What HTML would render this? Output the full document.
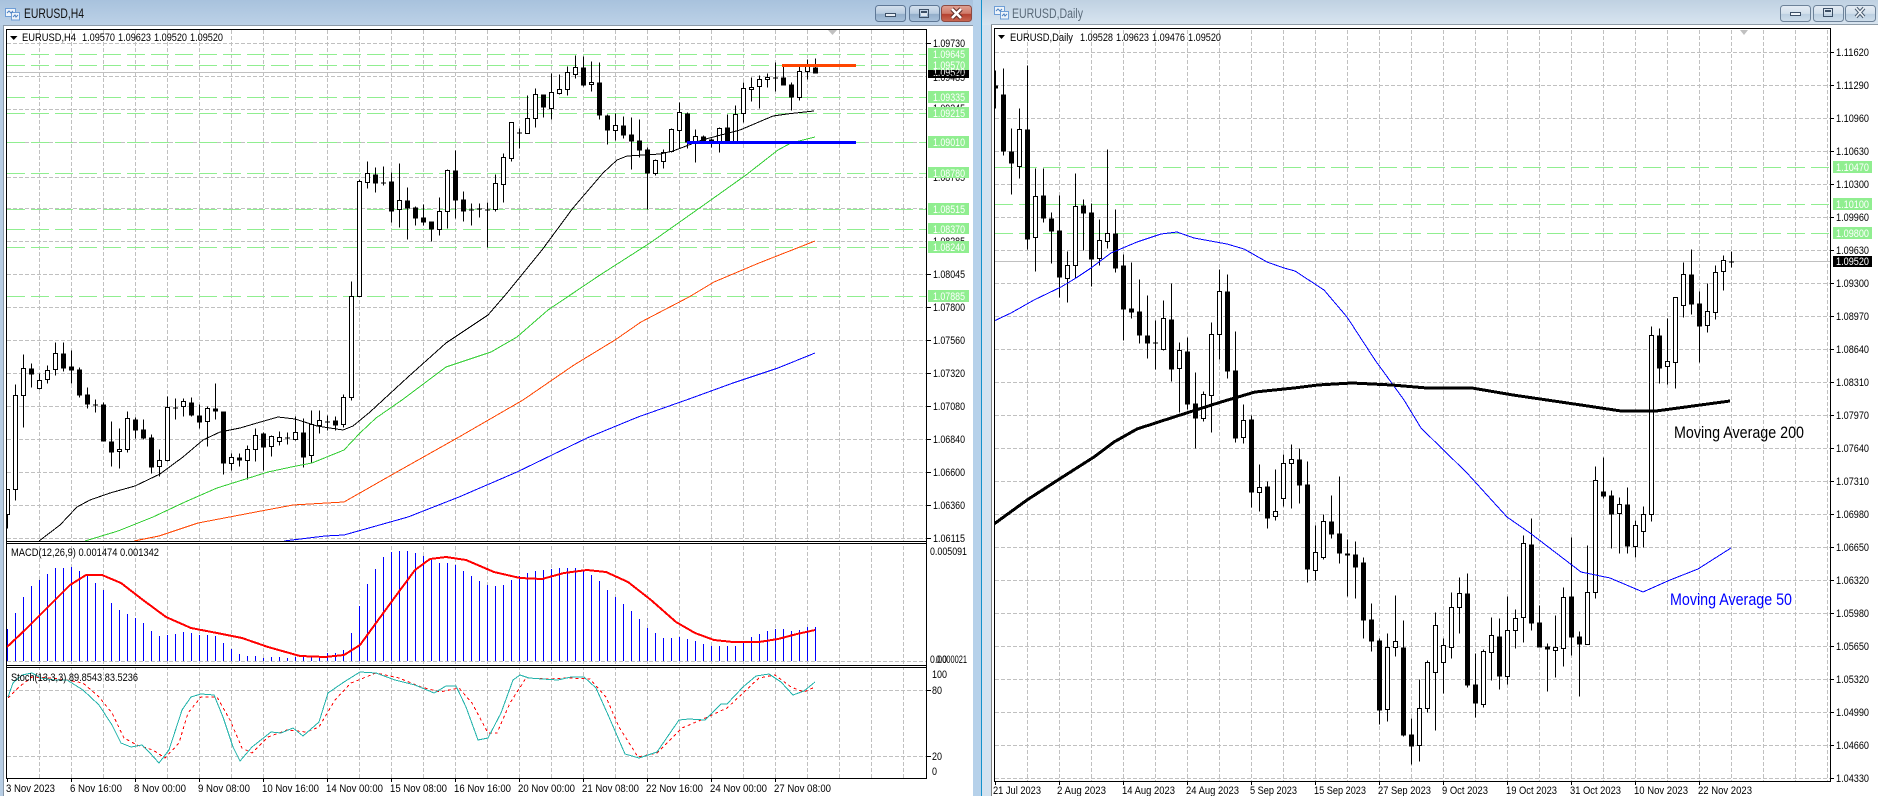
<!DOCTYPE html>
<html><head><meta charset="utf-8"><title>EURUSD</title>
<style>
html,body{margin:0;padding:0;background:#fff;width:1878px;height:796px;overflow:hidden}
svg{display:block}
text{font-family:"Liberation Sans",sans-serif;font-size:11px;fill:#000}
polyline{shape-rendering:crispEdges;stroke-linejoin:round}
.g{stroke:#c0c0c0;stroke-width:1;stroke-dasharray:4 2;fill:none}
.l{stroke:#90ee90;stroke-width:1;stroke-dasharray:18 6;fill:none}
.w{stroke:#000;stroke-width:1;fill:none}
.wb{stroke:#000;stroke-width:1;fill:#fff}
.bb{stroke:#000;stroke-width:5;fill:none}
.lb{fill:#90ee90}
.t{fill:#fff}
</style></head><body>
<svg width="1878" height="796" viewBox="0 0 1878 796" xmlns="http://www.w3.org/2000/svg">
<defs>
<linearGradient id="tl" x1="0" y1="0" x2="0" y2="1"><stop offset="0" stop-color="#a8c2dd"/><stop offset="1" stop-color="#bcd1e7"/></linearGradient>
<linearGradient id="tr" x1="0" y1="0" x2="0" y2="1"><stop offset="0" stop-color="#bfd1e2"/><stop offset="1" stop-color="#d9e5f0"/></linearGradient>
<linearGradient id="b1" x1="0" y1="0" x2="0" y2="1"><stop offset="0" stop-color="#d5e1ee"/><stop offset=".5" stop-color="#b9cce0"/><stop offset=".55" stop-color="#93aeca"/><stop offset="1" stop-color="#a9c2db"/></linearGradient>
<linearGradient id="b2" x1="0" y1="0" x2="0" y2="1"><stop offset="0" stop-color="#e0a396"/><stop offset=".5" stop-color="#cf7a69"/><stop offset=".55" stop-color="#b5402f"/><stop offset="1" stop-color="#c96a55"/></linearGradient>
<linearGradient id="b3" x1="0" y1="0" x2="0" y2="1"><stop offset="0" stop-color="#e4ecf4"/><stop offset=".5" stop-color="#d3e0ec"/><stop offset=".55" stop-color="#bccfe1"/><stop offset="1" stop-color="#cfdeeb"/></linearGradient>
<clipPath id="cl"><rect x="7" y="30" width="920" height="748"/></clipPath>
<clipPath id="cr"><rect x="995" y="30" width="835" height="751"/></clipPath>
</defs>

<!-- window chrome -->
<rect x="0" y="0" width="973" height="796" fill="#b7cde4"/>
<rect x="0" y="0" width="973" height="25" fill="url(#tl)"/>
<rect x="3" y="25" width="970" height="771" fill="#fff"/>
<rect x="3" y="25" width="970" height="1" fill="#8a99a8"/>
<rect x="3" y="25" width="1" height="771" fill="#8a99a8"/>
<rect x="973" y="0" width="8" height="796" fill="#b6d1ea"/>
<rect x="981" y="0" width="1" height="796" fill="#1392cc"/>
<rect x="982" y="0" width="896" height="25" fill="url(#tr)"/>
<rect x="982" y="25" width="9" height="771" fill="#d3e2f0"/>
<rect x="991" y="25" width="887" height="771" fill="#fff"/>
<rect x="991" y="24" width="887" height="1" fill="#8f9da9"/>
<rect x="991" y="25" width="1" height="771" fill="#808080"/>

<!-- title icons -->
<g fill="#eef4fa" stroke="#6f9ed6"><rect x="5.5" y="8.5" width="10" height="8"/><rect x="11.5" y="12.5" width="8" height="7.5"/></g>
<path d="M7 13l2-2 2 2 2-2M13 17l2-2 1 2 2-2" fill="none" stroke="#4a7fc0"/>
<g fill="#eef4fa" stroke="#6f9ed6"><rect x="994.5" y="6.5" width="10" height="8"/><rect x="1000.5" y="11.5" width="8" height="7.5"/></g>
<path d="M996 11l2-2 2 2 2-2M1002 16l2-2 1 2 2-2" fill="none" stroke="#4a7fc0"/>
<text x="24" y="18" style="font-size:13.5px;fill:#111" textLength="60" lengthAdjust="spacingAndGlyphs">EURUSD,H4</text>
<text x="1012" y="18" style="font-size:13.5px;fill:#5b6b7a" textLength="71" lengthAdjust="spacingAndGlyphs">EURUSD,Daily</text>

<!-- window buttons left -->
<rect x="875.5" y="5.5" width="30" height="16" rx="3" fill="url(#b1)" stroke="#5f7896"/>
<rect x="909.5" y="5.5" width="30" height="16" rx="3" fill="url(#b1)" stroke="#5f7896"/>
<rect x="941.5" y="5.5" width="30" height="16" rx="3" fill="url(#b2)" stroke="#8d4a42"/>
<rect x="885.5" y="13.5" width="10" height="3" fill="#e8eef5" stroke="#3c4f66"/>
<rect x="919.5" y="9.5" width="9" height="8" fill="none" stroke="#3c4f66"/><rect x="921" y="11" width="6" height="5" fill="#dfe8f1"/><rect x="921" y="11" width="6" height="2" fill="#3c4f66"/>
<path d="M952 9l9 9M961 9l-9 9" stroke="#5b2a25" stroke-width="4.5"/><path d="M952 9l9 9M961 9l-9 9" stroke="#fff" stroke-width="2.6"/>
<!-- window buttons right -->
<rect x="1780.5" y="5.5" width="30" height="16" rx="3" fill="url(#b3)" stroke="#6d8299"/>
<rect x="1813.5" y="5.5" width="30" height="16" rx="3" fill="url(#b3)" stroke="#6d8299"/>
<rect x="1845.5" y="5.5" width="30" height="16" rx="3" fill="url(#b3)" stroke="#6d8299"/>
<rect x="1790.5" y="12.5" width="10" height="3" fill="#f0f5fa" stroke="#3c4f66"/>
<rect x="1823.5" y="8.5" width="9" height="8" fill="none" stroke="#3c4f66"/><rect x="1825" y="10" width="6" height="2" fill="#3c4f66"/>
<path d="M1856 8l8 9M1864 8l-8 9" stroke="#4a5c70" stroke-width="3.6"/><path d="M1856 8l8 9M1864 8l-8 9" stroke="#eef3f8" stroke-width="1.6"/>

<!-- LEFT CHART -->
<g shape-rendering="crispEdges">
<path class="g" d="M39.5 30V778M71.5 30V778M103.5 30V778M135.5 30V778M167.5 30V778M199.5 30V778M231.5 30V778M263.5 30V778M295.5 30V778M327.5 30V778M359.5 30V778M391.5 30V778M423.5 30V778M455.5 30V778M487.5 30V778M519.5 30V778M551.5 30V778M583.5 30V778M615.5 30V778M647.5 30V778M679.5 30V778M711.5 30V778M743.5 30V778M775.5 30V778M807.5 30V778M839.5 30V778M871.5 30V778M903.5 30V778"/>
<path class="g" d="M7 43.5H927M7 76.5H927M7 109.5H927M7 142.5H927M7 177.5H927M7 208.5H927M7 241.5H927M7 274.5H927M7 307.5H927M7 340.5H927M7 373.5H927M7 406.5H927M7 439.5H927M7 472.5H927M7 505.5H927M7 538.5H927M7 661.5H927M7 690.5H927M7 756.5H927"/>
<path class="l" d="M7 54.5H927M7 65.5H927M7 97.5H927M7 113.5H927M7 142.5H927M7 173.5H927M7 209.5H927M7 229.5H927M7 247.5H927M7 296.5H927"/>
<path d="M7 72.5H927" stroke="#c0c0c0" fill="none"/>
</g>
<g clip-path="url(#cl)">
<g shape-rendering="crispEdges" transform="translate(.5 .5)">
<path class="w" d="M7 489V528M15 384V500M23 354V427M31 363V387M39 373V389M47 365V383M55 342V375M63 342V371M71 350V383M79 367V397M87 387V408M95 399V412M103 402V441M111 421V466M119 428V468M127 411V452M135 417V438M143 419V439M151 434V473M159 449V476M167 396V461M175 398V419M183 398V416M191 397V416M199 404V428M207 406V446M215 383V419M223 411V474M231 453V470M239 453V466M247 445V479M255 428V461M263 432V470M271 435V456M279 431V445M287 432V444M295 416V440M303 418V467M311 410V463M319 410V433M327 415V430M335 416V430M343 394V427M351 281V400M359 179V296M367 161V188M375 167V192M383 166V185M391 172V222M399 163V227M407 187V239M415 206V225M423 204V225M431 221V241M439 197V235M447 169V228M455 150V218M463 191V221M471 203V225M479 203V217M487 202V247M495 174V211M503 153V202M511 122V161M519 128V148M527 95V133M535 88V127M543 94V117M551 73V119M559 74V94M567 66V95M575 55V78M583 56V86M591 61V91M599 62V119M607 114V144M615 113V140M623 116V138M631 117V169M639 119V157M647 147V209M655 159V175M663 149V168M671 128V152M679 102V148M687 112V148M695 129V162M703 135V142M711 138V147M719 127V152M727 114V142M735 105V141M743 82V122M751 77V101M759 75V108M767 73V87M775 62V91M783 65V85M791 82V110M799 66V100M807 59V79M815 58V73"/>
<path class="wb" d="M5 489h4V514h-4zM13 395h4V489h-4zM21 368h4V395h-4zM37 380h4V388h-4zM45 370h4V379h-4zM53 353h4V369h-4zM117 449h4V451h-4zM125 418h4V449h-4zM157 460h4V466h-4zM165 407h4V460h-4zM181 401h4V406h-4zM205 408h4V421h-4zM229 457h4V463h-4zM245 449h4V460h-4zM253 435h4V449h-4zM269 436h4V446h-4zM277 437h4V441h-4zM293 432h4V439h-4zM309 424h4V455h-4zM317 420h4V425h-4zM341 397h4V424h-4zM349 296h4V397h-4zM357 181h4V296h-4zM365 173h4V182h-4zM397 200h4V209h-4zM437 211h4V229h-4zM445 170h4V211h-4zM493 183h4V209h-4zM501 157h4V184h-4zM509 122h4V158h-4zM525 118h4V133h-4zM533 94h4V118h-4zM549 92h4V108h-4zM557 89h4V93h-4zM565 72h4V89h-4zM573 67h4V74h-4zM589 82h4V84h-4zM613 125h4V130h-4zM653 160h4V173h-4zM661 152h4V161h-4zM669 129h4V151h-4zM677 112h4V130h-4zM693 136h4V142h-4zM717 128h4V142h-4zM733 114h4V141h-4zM741 88h4V113h-4zM749 87h4V89h-4zM757 79h4V86h-4zM765 77h4V79h-4zM797 71h4V97h-4zM805 66h4V71h-4z"/>
<path class="bb" d="M31 368V374M63 353V368M71 366V370M79 369V395M87 394V404M95 404V405M103 404V441M111 441V452M135 419V430M143 429V438M151 437V467M175 407V408M191 402V415M199 415V422M215 408V411M223 411V463M239 457V460M263 433V447M287 437V438M303 432V457M327 421V422M335 420V425M375 174V183M383 182V183M391 181V211M407 200V208M415 207V218M423 217V222M431 221V229M455 170V200M463 199V211M471 209V210M479 208V209M487 209V210M519 132V133M543 94V107M583 67V85M599 82V115M607 115V130M623 125V135M631 134V141M639 140V150M647 149V173M687 113V142M703 136V142M711 139V141M727 127V142M775 77V78M783 77V85M791 84V97M815 67V73"/>
</g>
<polyline fill="none" stroke="#000" points="39,541 60,525 77,507 90,500 110,493 135,486 160,474 183,457 203,440 220,432 240,428 257,423 278,417 295,419 317,426 343,430 353,426 370,412 383,400 408,377 446,343 488,315 507,293 542,250 573,208 603,173 617,160 627,156 660,154 673,151 702,140 740,130 773,116 787,114 814,111"/>
<polyline fill="none" stroke="#32cd32" points="85,541 118,531 153,517 185,502 217,488 268,472 296,466 312,463 344,450 360,433 376,418 402,400 446,367 491,352 517,337 548,310 600,275 650,243 701,207 746,175 778,150 791,143 815,137"/>
<polyline fill="none" stroke="#ff4500" points="134,541 159,536 198,523 261,511 293,505 344,502 395,473 459,437 523,400 574,365 615,340 641,322 689,297 714,282 759,263 815,241"/>
<polyline fill="none" stroke="#0000ff" points="284,541 325,536 344,535 408,517 459,497 517,472 587,438 638,417 689,399 733,383 778,368 815,353"/>
<path d="M687 142.5H856" stroke="#0000ff" stroke-width="3"/>
<path d="M782 65.5H856" stroke="#ff4500" stroke-width="3"/>
<!-- MACD -->
<path stroke="#0000ff" fill="none" shape-rendering="crispEdges" d="M7.5 661V629M15.5 661V613M23.5 661V597M31.5 661V586M39.5 661V580M47.5 661V574M55.5 661V568M63.5 661V568M71.5 661V567M79.5 661V571M87.5 661V575M95.5 661V583M103.5 661V590M111.5 661V603M119.5 661V610M127.5 661V614M135.5 661V618M143.5 661V623M151.5 661V631M159.5 661V636M167.5 661V635M175.5 661V634M183.5 661V632M191.5 661V633M199.5 661V635M207.5 661V635M215.5 661V636M223.5 661V643M231.5 661V649M239.5 661V654M247.5 661V656M255.5 661V656M263.5 661V658M271.5 661V657M279.5 661V657M287.5 661V658M295.5 661V657M303.5 661V657M311.5 661V656M319.5 661V656M327.5 661V653M335.5 661V653M343.5 661V650M351.5 661V633M359.5 661V606M367.5 661V584M375.5 661V569M383.5 661V557M391.5 661V552M399.5 661V551M407.5 661V551M415.5 661V553M423.5 661V556M431.5 661V560M439.5 661V563M447.5 661V563M455.5 661V565M463.5 661V571M471.5 661V576M479.5 661V581M487.5 661V585M495.5 661V586M503.5 661V585M511.5 661V580M519.5 661V576M527.5 661V573M535.5 661V571M543.5 661V570M551.5 661V569M559.5 661V568M567.5 661V568M575.5 661V568M583.5 661V570M591.5 661V575M599.5 661V581M607.5 661V590M615.5 661V597M623.5 661V604M631.5 661V611M639.5 661V619M647.5 661V628M655.5 661V633M663.5 661V638M671.5 661V638M679.5 661V637M687.5 661V639M695.5 661V641M703.5 661V644M711.5 661V646M719.5 661V646M727.5 661V646M735.5 661V646M743.5 661V642M751.5 661V637M759.5 661V634M767.5 661V631M775.5 661V629M783.5 661V629M791.5 661V631M799.5 661V630M807.5 661V627M815.5 661V627"/>
<polyline fill="none" stroke="#ff0000" stroke-width="2" points="7,647 25,630 48,607 70,585 86,575 102,575 121,583 143,600 166,617 191,628 217,633 242,638 268,647 300,656 325,657 344,655 360,645 376,623 395,597 415,570 430,559 446,557 466,560 494,572 520,578 542,579 564,573 587,570 606,572 628,582 651,600 676,622 695,633 714,640 733,642 759,642 778,639 797,634 815,630"/>
<!-- Stoch -->
<polyline fill="none" stroke="#ff0000" stroke-dasharray="3 3" points="8,698 19,687 32,677 51,678 67,680 83,683 99,697 112,713 124,738 137,745 153,750 165,758 179,743 188,713 201,697 217,697 230,720 242,748 252,753 268,737 287,730 306,732 319,727 335,700 351,683 376,673 399,678 421,687 440,692 459,688 472,703 488,733 497,733 510,703 526,678 549,679 568,678 590,679 606,697 619,727 638,757 657,753 682,728 701,720 727,708 743,693 759,678 775,675 791,687 804,692 815,687"/>
<polyline fill="none" stroke="#20b2aa" points="8,697 13,683 22,675 32,673 41,678 54,680 67,680 83,690 99,705 112,725 121,743 131,747 142,745 150,753 159,763 169,750 182,710 191,697 201,694 214,695 223,717 233,747 240,761 252,747 271,732 281,733 293,728 303,736 319,722 328,693 344,682 360,672 376,673 395,680 415,685 434,693 446,686 456,686 466,707 478,740 488,738 501,713 513,680 520,675 529,678 542,679 558,680 571,677 584,677 596,688 609,717 625,754 639,758 657,752 679,720 689,719 705,720 721,704 727,704 743,687 756,676 769,674 781,682 793,695 804,691 815,682"/>
</g>
<polygon points="828,30 837,30 832.5,35" fill="#c0c0c0"/>
<!-- left frames -->
<g shape-rendering="crispEdges">
<rect x="7" y="542" width="920" height="2" fill="#fff"/><rect x="7" y="666" width="920" height="1" fill="#fff"/>
<path fill="none" stroke="#000" d="M6.5 778.5V29.5H926.5V778.5ZM6.5 541.5H927M6.5 543.5H927M6.5 665.5H927M6.5 667.5H927M927 43.5h4M927 274.5h4M927 307.5h4M927 340.5h4M927 373.5h4M927 406.5h4M927 439.5h4M927 472.5h4M927 505.5h4M927 538.5h4M927 690.5h4M927 756.5h4M135.5 778v4M263.5 778v4M391.5 778v4M519.5 778v4M647.5 778v4M775.5 778v4M7.5 778v4M71.5 778v4M199.5 778v4M327.5 778v4M455.5 778v4M583.5 778v4M711.5 778v4"/>
</g>
<polygon points="10,36 17.5,36 13.75,40" fill="#000"/>
<text x="22" y="41" textLength="54" lengthAdjust="spacingAndGlyphs">EURUSD,H4</text>
<text x="82" y="41" textLength="33" lengthAdjust="spacingAndGlyphs">1.09570</text>
<text x="118" y="41" textLength="33" lengthAdjust="spacingAndGlyphs">1.09623</text>
<text x="154" y="41" textLength="33" lengthAdjust="spacingAndGlyphs">1.09520</text>
<text x="190" y="41" textLength="33" lengthAdjust="spacingAndGlyphs">1.09520</text>
<text x="11" y="556" textLength="148" lengthAdjust="spacingAndGlyphs">MACD(12,26,9) 0.001474 0.001342</text>
<text x="11" y="681" textLength="127" lengthAdjust="spacingAndGlyphs">Stoch(13,3,3) 89.8543 83.5236</text>

<!-- left axis labels -->
<g>
<text x="933" y="47" textLength="32" lengthAdjust="spacingAndGlyphs">1.09730</text>
<text x="933" y="112" textLength="32" lengthAdjust="spacingAndGlyphs">1.09245</text>
<text x="933" y="181" textLength="32" lengthAdjust="spacingAndGlyphs">1.08765</text>
<text x="933" y="245" textLength="32" lengthAdjust="spacingAndGlyphs">1.08285</text>
<text x="933" y="278" textLength="32" lengthAdjust="spacingAndGlyphs">1.08045</text>
<text x="933" y="311" textLength="32" lengthAdjust="spacingAndGlyphs">1.07800</text>
<text x="933" y="344" textLength="32" lengthAdjust="spacingAndGlyphs">1.07560</text>
<text x="933" y="377" textLength="32" lengthAdjust="spacingAndGlyphs">1.07320</text>
<text x="933" y="410" textLength="32" lengthAdjust="spacingAndGlyphs">1.07080</text>
<text x="933" y="443" textLength="32" lengthAdjust="spacingAndGlyphs">1.06840</text>
<text x="933" y="476" textLength="32" lengthAdjust="spacingAndGlyphs">1.06600</text>
<text x="933" y="509" textLength="32" lengthAdjust="spacingAndGlyphs">1.06360</text>
<text x="933" y="542" textLength="32" lengthAdjust="spacingAndGlyphs">1.06115</text>
<text x="930" y="555" textLength="37" lengthAdjust="spacingAndGlyphs">0.005091</text>
<text x="930" y="663" textLength="17" lengthAdjust="spacingAndGlyphs">0.00</text>
<text x="936" y="663" textLength="31" lengthAdjust="spacingAndGlyphs">0.000021</text>
<text x="932" y="678" textLength="15" lengthAdjust="spacingAndGlyphs">100</text>
<text x="932" y="694" textLength="10" lengthAdjust="spacingAndGlyphs">80</text>
<text x="932" y="760" textLength="10" lengthAdjust="spacingAndGlyphs">20</text>
<text x="932" y="775" textLength="5" lengthAdjust="spacingAndGlyphs">0</text>
</g>
<g>
<rect class="lb" x="928" y="48" width="41" height="23"/>
<rect class="lb" x="928" y="91" width="41" height="12"/>
<rect class="lb" x="928" y="107" width="41" height="11"/>
<rect class="lb" x="928" y="136" width="41" height="12"/>
<rect class="lb" x="928" y="167" width="41" height="11"/>
<rect class="lb" x="928" y="203" width="41" height="12"/>
<rect class="lb" x="928" y="223" width="41" height="11"/>
<rect class="lb" x="928" y="241" width="41" height="12"/>
<rect class="lb" x="928" y="290" width="41" height="12"/>
<text class="t" x="933" y="58" textLength="32" lengthAdjust="spacingAndGlyphs">1.09645</text>
<text class="t" x="933" y="69" textLength="32" lengthAdjust="spacingAndGlyphs">1.09570</text>
<text class="t" x="933" y="101" textLength="32" lengthAdjust="spacingAndGlyphs">1.09335</text>
<text class="t" x="933" y="117" textLength="32" lengthAdjust="spacingAndGlyphs">1.09215</text>
<text class="t" x="933" y="146" textLength="32" lengthAdjust="spacingAndGlyphs">1.09010</text>
<text class="t" x="933" y="177" textLength="32" lengthAdjust="spacingAndGlyphs">1.08780</text>
<text class="t" x="933" y="213" textLength="32" lengthAdjust="spacingAndGlyphs">1.08515</text>
<text class="t" x="933" y="233" textLength="32" lengthAdjust="spacingAndGlyphs">1.08370</text>
<text class="t" x="933" y="251" textLength="32" lengthAdjust="spacingAndGlyphs">1.08240</text>
<text class="t" x="933" y="300" textLength="32" lengthAdjust="spacingAndGlyphs">1.07885</text>
<rect x="928" y="70" width="41" height="8" fill="#000"/>
<text class="t" x="933" y="76" textLength="32" lengthAdjust="spacingAndGlyphs">1.09520</text>
<text x="933" y="81" textLength="32" lengthAdjust="spacingAndGlyphs">1.09485</text>
</g>
<g>
<text x="6" y="792" textLength="49" lengthAdjust="spacingAndGlyphs">3 Nov 2023</text>
<text x="70" y="792" textLength="52" lengthAdjust="spacingAndGlyphs">6 Nov 16:00</text>
<text x="134" y="792" textLength="52" lengthAdjust="spacingAndGlyphs">8 Nov 00:00</text>
<text x="198" y="792" textLength="52" lengthAdjust="spacingAndGlyphs">9 Nov 08:00</text>
<text x="262" y="792" textLength="57" lengthAdjust="spacingAndGlyphs">10 Nov 16:00</text>
<text x="326" y="792" textLength="57" lengthAdjust="spacingAndGlyphs">14 Nov 00:00</text>
<text x="390" y="792" textLength="57" lengthAdjust="spacingAndGlyphs">15 Nov 08:00</text>
<text x="454" y="792" textLength="57" lengthAdjust="spacingAndGlyphs">16 Nov 16:00</text>
<text x="518" y="792" textLength="57" lengthAdjust="spacingAndGlyphs">20 Nov 00:00</text>
<text x="582" y="792" textLength="57" lengthAdjust="spacingAndGlyphs">21 Nov 08:00</text>
<text x="646" y="792" textLength="57" lengthAdjust="spacingAndGlyphs">22 Nov 16:00</text>
<text x="710" y="792" textLength="57" lengthAdjust="spacingAndGlyphs">24 Nov 00:00</text>
<text x="774" y="792" textLength="57" lengthAdjust="spacingAndGlyphs">27 Nov 08:00</text>
</g>

<!-- RIGHT CHART -->
<g shape-rendering="crispEdges">
<path class="g" d="M1027.5 30V781M1059.5 30V781M1091.5 30V781M1123.5 30V781M1155.5 30V781M1187.5 30V781M1219.5 30V781M1251.5 30V781M1283.5 30V781M1315.5 30V781M1347.5 30V781M1379.5 30V781M1411.5 30V781M1443.5 30V781M1475.5 30V781M1507.5 30V781M1539.5 30V781M1571.5 30V781M1603.5 30V781M1635.5 30V781M1667.5 30V781M1699.5 30V781M1731.5 30V781M1763.5 30V781M1795.5 30V781M1827.5 30V781"/>
<path class="g" d="M995 52.5H1830M995 85.5H1830M995 118.5H1830M995 151.5H1830M995 184.5H1830M995 217.5H1830M995 250.5H1830M995 283.5H1830M995 316.5H1830M995 349.5H1830M995 382.5H1830M995 415.5H1830M995 448.5H1830M995 481.5H1830M995 514.5H1830M995 547.5H1830M995 580.5H1830M995 613.5H1830M995 646.5H1830M995 679.5H1830M995 712.5H1830M995 745.5H1830M995 778.5H1830"/>
<path class="l" d="M995 167.5H1830M995 204.5H1830M995 233.5H1830"/>
<path d="M995 261.5H1830" stroke="#c0c0c0" fill="none"/>
</g>
<g clip-path="url(#cr)">
<g shape-rendering="crispEdges" transform="translate(.5 .5)">
<path class="w" d="M995 70V108M1003 68V155M1011 128V194M1019 108V178M1027 65V249M1035 168V271M1043 168V222M1051 212V263M1059 195V297M1067 251V302M1075 173V278M1083 199V250M1091 203V286M1099 219V265M1107 149V248M1115 209V272M1123 254V340M1131 262V318M1139 279V343M1147 295V358M1155 320V369M1163 300V350M1171 283V381M1179 342V412M1187 337V409M1195 372V448M1203 391V421M1211 322V432M1219 269V359M1227 274V378M1235 331V442M1243 404V443M1251 415V507M1259 464V511M1267 481V528M1275 469V520M1283 454V506M1291 444V508M1299 448V503M1307 461V582M1315 525V580M1323 514V559M1331 495V538M1339 476V563M1347 539V596M1355 541V598M1363 557V638M1371 603V651M1379 638V724M1387 633V721M1395 595V656M1403 620V736M1411 718V764M1419 679V761M1427 660V712M1435 612V730M1443 638V693M1451 592V658M1459 577V633M1467 573V687M1475 653V717M1483 649V707M1491 617V680M1499 618V689M1507 596V684M1515 609V648M1523 535V642M1531 518V630M1539 605V647M1547 643V691M1555 615V677M1563 587V666M1571 537V655M1579 631V696M1587 545V644M1595 466V598M1603 457V498M1611 490V548M1619 497V553M1627 487V553M1635 520V557M1643 506V547M1651 326V521M1659 328V383M1667 318V384M1675 297V388M1683 262V317M1691 249V314M1699 291V362M1707 283V332M1715 265V319M1723 255V290M1731 251V267"/>
<path class="wb" d="M1017 129h4V166h-4zM1033 196h4V237h-4zM1065 265h4V278h-4zM1073 206h4V265h-4zM1097 240h4V258h-4zM1105 233h4V241h-4zM1161 318h4V349h-4zM1177 350h4V368h-4zM1201 394h4V418h-4zM1209 334h4V395h-4zM1217 291h4V334h-4zM1241 420h4V437h-4zM1257 487h4V492h-4zM1273 511h4V516h-4zM1281 463h4V498h-4zM1289 459h4V463h-4zM1313 552h4V570h-4zM1321 521h4V557h-4zM1393 641h4V647h-4zM1385 647h4V709h-4zM1417 708h4V745h-4zM1425 662h4V708h-4zM1433 625h4V672h-4zM1441 645h4V662h-4zM1449 607h4V647h-4zM1457 593h4V607h-4zM1481 651h4V704h-4zM1489 635h4V652h-4zM1505 630h4V676h-4zM1513 618h4V630h-4zM1521 543h4V617h-4zM1553 647h4V650h-4zM1561 597h4V648h-4zM1585 592h4V644h-4zM1593 480h4V592h-4zM1617 504h4V513h-4zM1633 525h4V546h-4zM1641 514h4V531h-4zM1649 335h4V514h-4zM1665 361h4V366h-4zM1673 297h4V362h-4zM1681 274h4V305h-4zM1705 311h4V325h-4zM1713 272h4V312h-4zM1721 260h4V271h-4z"/>
<path class="bb" d="M995 85V88M1003 94V151M1011 151V163M1027 129V239M1043 195V218M1051 218V231M1059 230V277M1083 205V213M1091 212V259M1115 233V268M1123 265V309M1131 308V312M1139 311V335M1147 335V343M1155 342V343M1171 319V369M1187 351V404M1195 403V418M1227 291V371M1235 370V438M1251 419V492M1267 486V518M1299 459V485M1307 484V569M1331 521V534M1339 533V553M1347 553V555M1355 554V567M1363 562V620M1371 619V641M1379 640V710M1403 647V735M1411 734V746M1467 593V685M1475 684V703M1499 636V676M1531 544V623M1539 622V647M1547 646V649M1571 596V637M1579 636V644M1603 491V496M1611 495V514M1627 504V546M1659 335V368M1691 274V304M1699 303V326M1731 261V262"/>
</g>
<polyline fill="none" stroke="#0000ff" points="994,321 1011,313 1034,300 1061,287 1076,278 1091,268 1111,253 1137,242 1161,234 1177,232 1194,238 1227,244 1244,249 1267,262 1284,268 1295,271 1324,290 1347,317 1375,360 1404,400 1421,428 1467,473 1507,517 1530,533 1581,572 1610,578 1643,592 1670,580 1698,569 1731,548"/>
<polyline fill="none" stroke="#000" stroke-width="3" points="994,524 1027,500 1061,478 1094,457 1114,442 1137,429 1174,417 1221,402 1255,392 1294,388 1318,385 1352,383 1392,385 1427,388 1472,388 1513,395 1547,400 1581,405 1621,411 1656,411 1730,401"/>
</g>
<polygon points="1740,30 1748,30 1744,35" fill="#c0c0c0"/>
<g shape-rendering="crispEdges">
<path fill="none" stroke="#000" d="M994.5 781.5V28.5H1830.5V781.5ZM1830 52.5h4M1830 85.5h4M1830 118.5h4M1830 151.5h4M1830 184.5h4M1830 217.5h4M1830 250.5h4M1830 283.5h4M1830 316.5h4M1830 349.5h4M1830 382.5h4M1830 415.5h4M1830 448.5h4M1830 481.5h4M1830 514.5h4M1830 547.5h4M1830 580.5h4M1830 613.5h4M1830 646.5h4M1830 679.5h4M1830 712.5h4M1830 745.5h4M1830 778.5h4M995.5 781v4M1059.5 781v4M1123.5 781v4M1187.5 781v4M1251.5 781v4M1315.5 781v4M1379.5 781v4M1443.5 781v4M1507.5 781v4M1571.5 781v4M1635.5 781v4M1699.5 781v4"/>
</g>
<polygon points="998,35 1005,35 1001.5,39" fill="#000"/>
<text x="1010" y="41" textLength="63" lengthAdjust="spacingAndGlyphs">EURUSD,Daily</text>
<text x="1080" y="41" textLength="33" lengthAdjust="spacingAndGlyphs">1.09528</text>
<text x="1116" y="41" textLength="33" lengthAdjust="spacingAndGlyphs">1.09623</text>
<text x="1152" y="41" textLength="33" lengthAdjust="spacingAndGlyphs">1.09476</text>
<text x="1188" y="41" textLength="33" lengthAdjust="spacingAndGlyphs">1.09520</text>
<text x="1674" y="438" style="font-size:16.5px" textLength="130" lengthAdjust="spacingAndGlyphs">Moving Average 200</text>
<text x="1670" y="605" style="font-size:16.5px;fill:#0000ff" textLength="122" lengthAdjust="spacingAndGlyphs">Moving Average 50</text>

<g>
<text x="1836" y="56" textLength="33" lengthAdjust="spacingAndGlyphs">1.11620</text>
<text x="1836" y="89" textLength="33" lengthAdjust="spacingAndGlyphs">1.11290</text>
<text x="1836" y="122" textLength="33" lengthAdjust="spacingAndGlyphs">1.10960</text>
<text x="1836" y="155" textLength="33" lengthAdjust="spacingAndGlyphs">1.10630</text>
<text x="1836" y="188" textLength="33" lengthAdjust="spacingAndGlyphs">1.10300</text>
<text x="1836" y="221" textLength="33" lengthAdjust="spacingAndGlyphs">1.09960</text>
<text x="1836" y="254" textLength="33" lengthAdjust="spacingAndGlyphs">1.09630</text>
<text x="1836" y="287" textLength="33" lengthAdjust="spacingAndGlyphs">1.09300</text>
<text x="1836" y="320" textLength="33" lengthAdjust="spacingAndGlyphs">1.08970</text>
<text x="1836" y="353" textLength="33" lengthAdjust="spacingAndGlyphs">1.08640</text>
<text x="1836" y="386" textLength="33" lengthAdjust="spacingAndGlyphs">1.08310</text>
<text x="1836" y="419" textLength="33" lengthAdjust="spacingAndGlyphs">1.07970</text>
<text x="1836" y="452" textLength="33" lengthAdjust="spacingAndGlyphs">1.07640</text>
<text x="1836" y="485" textLength="33" lengthAdjust="spacingAndGlyphs">1.07310</text>
<text x="1836" y="518" textLength="33" lengthAdjust="spacingAndGlyphs">1.06980</text>
<text x="1836" y="551" textLength="33" lengthAdjust="spacingAndGlyphs">1.06650</text>
<text x="1836" y="584" textLength="33" lengthAdjust="spacingAndGlyphs">1.06320</text>
<text x="1836" y="617" textLength="33" lengthAdjust="spacingAndGlyphs">1.05980</text>
<text x="1836" y="650" textLength="33" lengthAdjust="spacingAndGlyphs">1.05650</text>
<text x="1836" y="683" textLength="33" lengthAdjust="spacingAndGlyphs">1.05320</text>
<text x="1836" y="716" textLength="33" lengthAdjust="spacingAndGlyphs">1.04990</text>
<text x="1836" y="749" textLength="33" lengthAdjust="spacingAndGlyphs">1.04660</text>
<text x="1836" y="782" textLength="33" lengthAdjust="spacingAndGlyphs">1.04330</text>
<rect class="lb" x="1833" y="161" width="39" height="12"/>
<rect class="lb" x="1833" y="198" width="39" height="12"/>
<rect class="lb" x="1833" y="227" width="39" height="12"/>
<text class="t" x="1836" y="171" textLength="33" lengthAdjust="spacingAndGlyphs">1.10470</text>
<text class="t" x="1836" y="208" textLength="33" lengthAdjust="spacingAndGlyphs">1.10100</text>
<text class="t" x="1836" y="237" textLength="33" lengthAdjust="spacingAndGlyphs">1.09800</text>
<rect x="1833" y="256" width="39" height="11" fill="#000"/>
<text class="t" x="1836" y="265" textLength="33" lengthAdjust="spacingAndGlyphs">1.09520</text>
</g>
<g>
<text x="993" y="794" textLength="48" lengthAdjust="spacingAndGlyphs">21 Jul 2023</text>
<text x="1057" y="794" textLength="49" lengthAdjust="spacingAndGlyphs">2 Aug 2023</text>
<text x="1122" y="794" textLength="53" lengthAdjust="spacingAndGlyphs">14 Aug 2023</text>
<text x="1186" y="794" textLength="53" lengthAdjust="spacingAndGlyphs">24 Aug 2023</text>
<text x="1250" y="794" textLength="47" lengthAdjust="spacingAndGlyphs">5 Sep 2023</text>
<text x="1314" y="794" textLength="52" lengthAdjust="spacingAndGlyphs">15 Sep 2023</text>
<text x="1378" y="794" textLength="53" lengthAdjust="spacingAndGlyphs">27 Sep 2023</text>
<text x="1442" y="794" textLength="46" lengthAdjust="spacingAndGlyphs">9 Oct 2023</text>
<text x="1506" y="794" textLength="51" lengthAdjust="spacingAndGlyphs">19 Oct 2023</text>
<text x="1570" y="794" textLength="51" lengthAdjust="spacingAndGlyphs">31 Oct 2023</text>
<text x="1634" y="794" textLength="54" lengthAdjust="spacingAndGlyphs">10 Nov 2023</text>
<text x="1698" y="794" textLength="54" lengthAdjust="spacingAndGlyphs">22 Nov 2023</text>
</g>
</svg>
</body></html>
